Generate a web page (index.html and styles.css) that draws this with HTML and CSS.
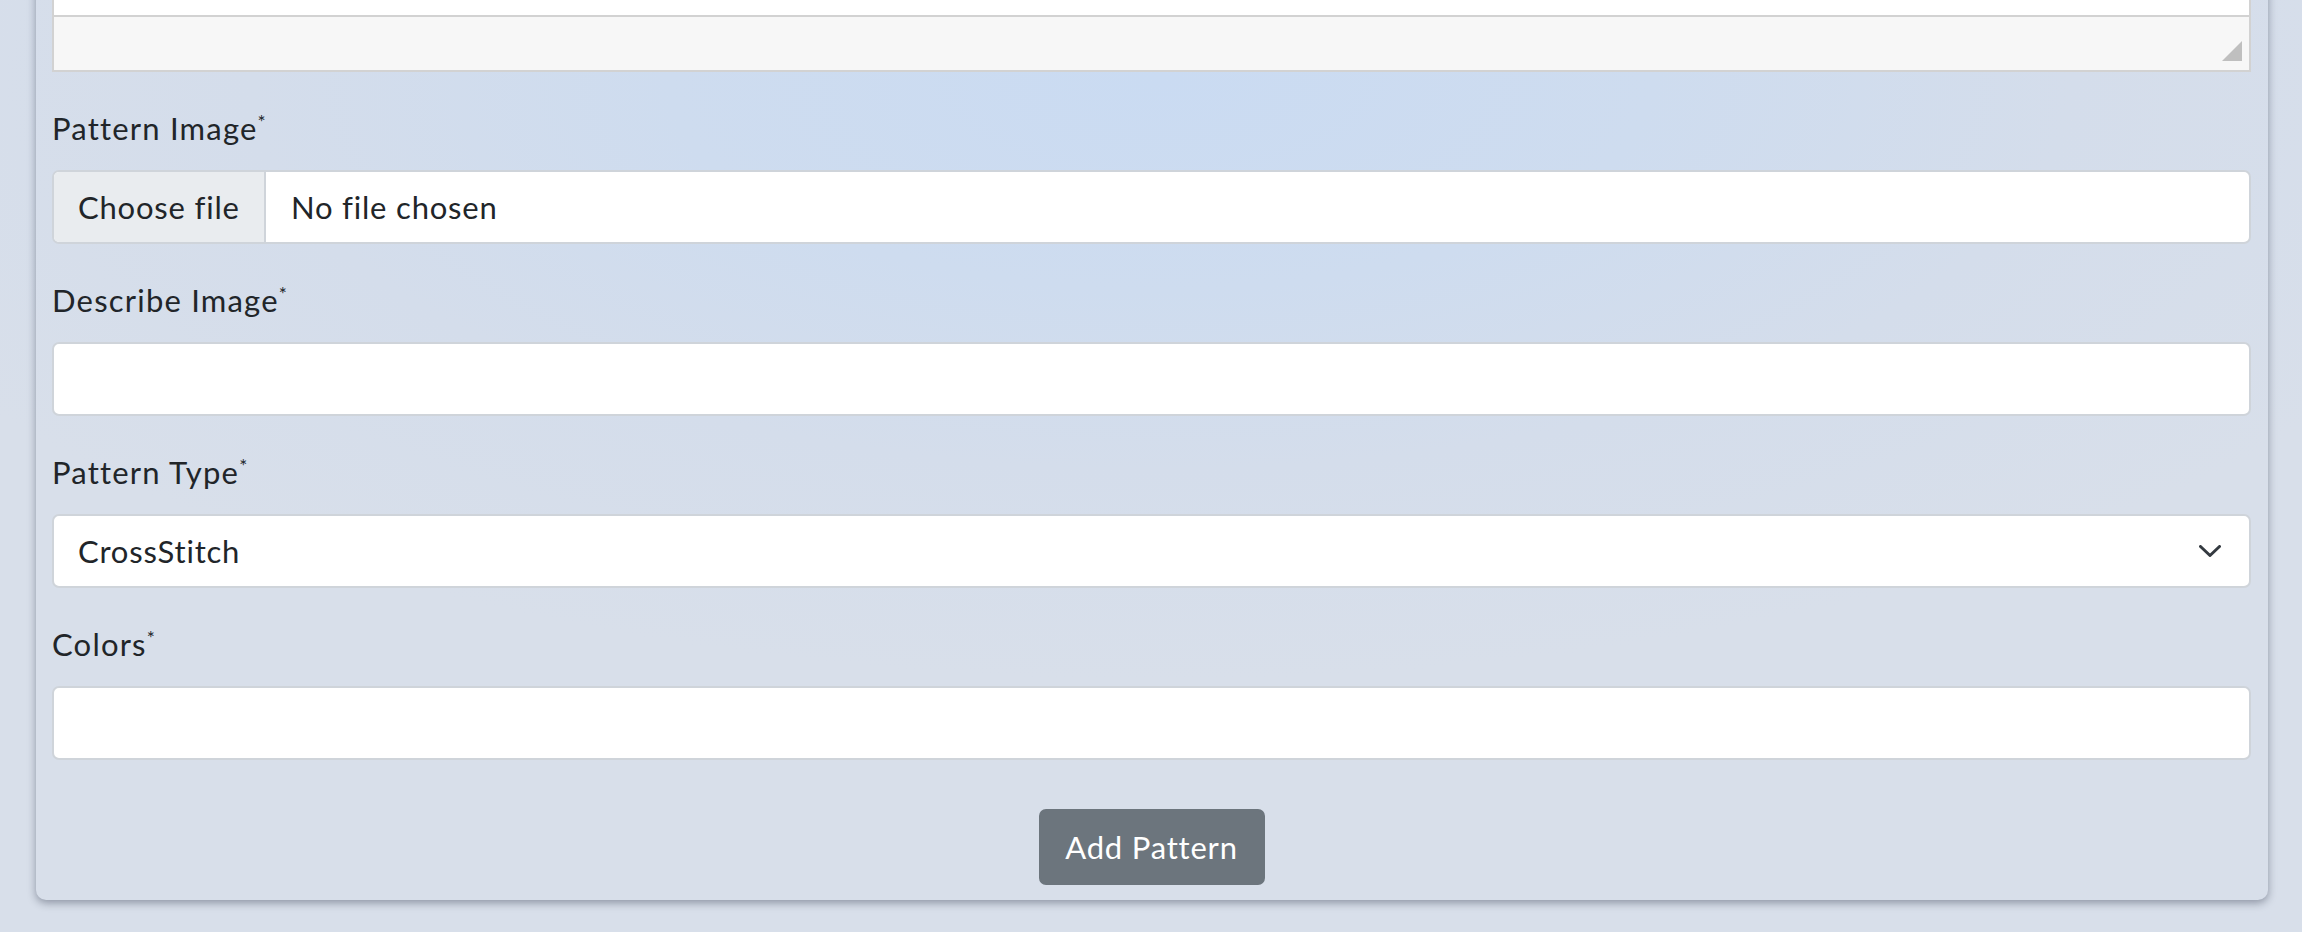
FILE: index.html
```html
<!DOCTYPE html>
<html lang="en">
<head>
<meta charset="utf-8">
<title>Add Pattern</title>
<link rel="stylesheet" href="styles.css">
</head>
<body>
<div class="card">
  <div class="editor">
    <div class="editor-area"></div>
    <div class="editor-status">
      <svg class="resize" width="20" height="20" viewBox="0 0 20 20"><polygon points="20,0 20,20 0,20" fill="#bfbfbf"/></svg>
    </div>
  </div>

  <div class="group">
    <label class="label">Pattern Image<sup>*</sup></label>
    <div class="control file">
      <span class="file-btn">Choose file</span>
      <span class="file-name">No file chosen</span>
    </div>
  </div>

  <div class="group">
    <label class="label">Describe Image<sup>*</sup></label>
    <div class="control"></div>
  </div>

  <div class="group">
    <label class="label">Pattern Type<sup>*</sup></label>
    <div class="control select">
      <span class="select-value">CrossStitch</span>
      <svg class="chevron" width="22" height="12" viewBox="0 0 22 12"><polyline points="1.5,1.5 11,10.5 20.5,1.5" fill="none" stroke="#343a40" stroke-width="3" stroke-linecap="round" stroke-linejoin="round"/></svg>
    </div>
  </div>

  <div class="group last">
    <label class="label">Colors<sup>*</sup></label>
    <div class="control"></div>
  </div>

  <div class="actions">
    <button class="btn" type="button">Add Pattern</button>
  </div>
</div>
</body>
</html>
```
FILE: styles.css
```css
html, body {
  margin: 0;
  padding: 0;
}
body {
  height: 932px;
  overflow: hidden;
  font-family: "Lato", "Noto Sans", sans-serif;
  font-weight: 400;
  letter-spacing: 0.8px;
  color: #212529;
  background: radial-gradient(ellipse 1400px 600px at 1160px 80px, #cadbf2 0%, #cedcef 35%, #d4ddeb 65%, #d8dfea 100%), #d8dfea;
}
.card {
  margin: -60px 34px 0 36px;
  padding: 16px 17px 15px 16px;
  border-radius: 10px;
  box-shadow: 0 3px 9px rgba(20, 30, 50, 0.38);
}
.editor {
  border: 2px solid #d2d2d2;
  margin-bottom: 32px;
}
.editor-area {
  height: 57px;
  background: #ffffff;
}
.editor-status {
  border-top: 2px solid #d2d2d2;
  background: #f7f7f7;
  display: flex;
  justify-content: flex-end;
  align-items: flex-end;
  padding: 0 7px 9px 0;
  box-sizing: border-box;
  height: 55px;
}
.resize { display: block; }
.group {
  margin-bottom: 32px;
}
.group.last { margin-bottom: 0; }
.label {
  display: block;
  font-size: 31px;
  line-height: 48px;
  height: 48px;
  margin-bottom: 18px;
  letter-spacing: 1.2px;
}
.label sup {
  font-size: 19px;
  line-height: 0;
  vertical-align: 0;
  position: relative;
  top: -11px;
  margin-left: 0;
}
.control {
  height: 74px;
  box-sizing: border-box;
  background: #ffffff;
  border: 2px solid #cfd4da;
  border-radius: 7px;
  font-size: 31px;
  display: flex;
  align-items: center;
}
.file {
  overflow: hidden;
}
.file-btn {
  align-self: stretch;
  display: flex;
  align-items: center;
  padding: 0 24px 0 24px;
  background: #e9ecef;
  border-right: 2px solid #cfd4da;
  width: 212px;
  box-sizing: border-box;
}
.file-name {
  padding-left: 25px;
}
.select {
  padding: 0 28px 0 24px;
}
.select-value { flex: 1; }
.chevron { display: block; margin-top: -1px; }
.actions {
  display: flex;
  justify-content: center;
  margin-top: 49px;
}
.btn {
  width: 226px;
  height: 76px;
  font-family: inherit;
  font-weight: 400;
  letter-spacing: 0.8px;
  font-size: 31px;
  color: #ffffff;
  background: #6c757d;
  border: 2px solid #6c757d;
  border-radius: 7px;
  padding: 0;
  cursor: pointer;
}
```
